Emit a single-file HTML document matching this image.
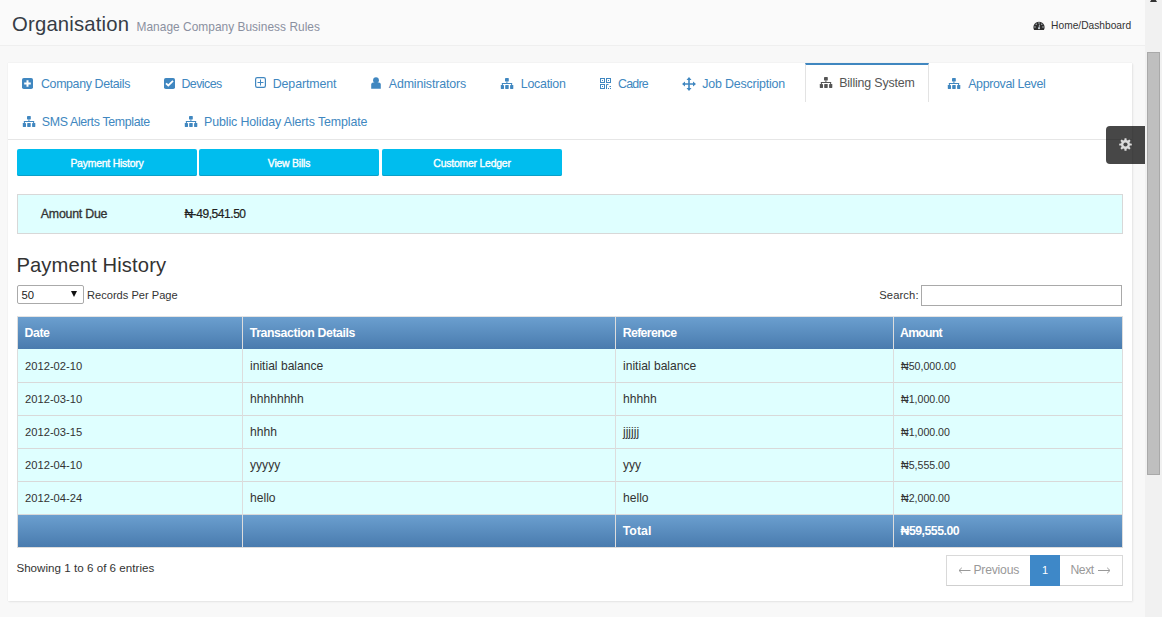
<!DOCTYPE html>
<html><head><meta charset="utf-8">
<style>
*{box-sizing:border-box;}
html,body{margin:0;padding:0;}
body{width:1162px;height:617px;overflow:hidden;position:relative;background:#f8f8f8;font-family:"Liberation Sans",sans-serif;color:#333;}
.a{position:absolute;white-space:nowrap;line-height:1;}
#hdr{position:absolute;left:0;top:0;width:1145px;height:46px;background:#fafafa;border-bottom:1px solid #efefef;}
#sb{position:absolute;left:1145px;top:0;width:17px;height:617px;background:#f1f1f1;}
#thumb{position:absolute;left:2px;top:52px;width:13px;height:423px;background:#bfbfbf;border:1px solid #a9a9a9;}
#panel{position:absolute;left:8px;top:63px;width:1124px;height:538px;background:#fff;box-shadow:1px 1px 2px rgba(0,0,0,.07),0 0 1px rgba(0,0,0,.1);}
.tab{color:#4087c0;font-size:11.8px;}
.ico{position:absolute;}
.btn{position:absolute;top:149px;width:180px;height:27px;background:#00bdee;border-radius:2px;box-shadow:inset 0 -1px 0 #0aa0c8;color:#fff;font-size:10.4px;letter-spacing:-0.2px;-webkit-text-stroke:0.35px #fff;text-align:center;line-height:29px;}
.th{position:absolute;color:#fff;font-weight:bold;font-size:11.3px;}
.td{position:absolute;font-size:11.3px;color:#333;}
</style></head><body>
<div id="hdr"></div>
<div class="a" id="org" style="left:12.1px;top:14px;font-size:20.3px;color:#363c46;letter-spacing:0.173px;">Organisation</div>
<div class="a" id="sub" style="left:136.5px;top:22px;font-size:11.9px;color:#8a90a0;letter-spacing:0.036px;">Manage Company Business Rules</div>
<svg class="ico" style="left:1033px;top:21px" width="12" height="9" viewBox="0 0 12 9"><path d="M1.1 9 A5.6 5.6 0 1 1 10.9 9 Z" fill="#2e2e2e"/><g fill="#cfd8e0"><circle cx="6" cy="2" r="0.65"/><circle cx="3.2" cy="3.2" r="0.65"/><circle cx="8.8" cy="3.2" r="0.65"/><circle cx="2" cy="6" r="0.65"/><circle cx="10" cy="6" r="0.65"/><circle cx="6" cy="7.3" r="1"/></g><path d="M6 7.3 L6.5 3.6" stroke="#cfd8e0" stroke-width="0.8"/></svg>
<div class="a" id="home" style="left:1051.1px;top:21px;font-size:10.2px;color:#333;letter-spacing:0.008px;">Home/Dashboard</div>

<div id="sb"><svg style="position:absolute;left:5px;top:-4px" width="7" height="6"><path d="M3.5 0 L7 6 L0 6Z" fill="#333"/></svg><div id="thumb"></div></div>

<div id="panel"></div>
<!-- active tab -->
<div style="position:absolute;left:805px;top:63px;width:124px;height:39px;border:1px solid #e3e3e3;border-top:2px solid #4087c0;border-bottom:none;background:#fff;"></div>
<div style="position:absolute;left:8px;top:139px;width:1124px;height:1px;background:#e6e6e6;"></div>

<!-- tab icons -->
<svg class="ico" style="left:22px;top:78px" width="11" height="11" viewBox="0 0 11 11"><rect x="0" y="0" width="11" height="11" rx="1.8" fill="#4087c0"/><path d="M5.5 2.2V8.8M2.2 5.5H8.8" stroke="#fff" stroke-width="2"/></svg>
<div class="a tab" id="t1" style="left:41.0px;top:78px;font-size:12.4px;letter-spacing:-0.357px;">Company Details</div>
<svg class="ico" style="left:164px;top:78px" width="11" height="11" viewBox="0 0 11 11"><rect x="0" y="0" width="11" height="11" rx="1.8" fill="#4087c0"/><path d="M2 5.3L4.3 7.5L9 2.8" stroke="#fff" stroke-width="1.8" fill="none"/></svg>
<div class="a tab" id="t2" style="left:181.4px;top:78px;font-size:12.4px;letter-spacing:-0.533px;">Devices</div>
<svg class="ico" style="left:255px;top:77px" width="11" height="11" viewBox="0 0 11 11"><rect x="0.6" y="0.6" width="9.8" height="9.8" rx="1.6" fill="none" stroke="#4087c0" stroke-width="1.2"/><path d="M5.5 2.5V8.5M2.5 5.5H8.5" stroke="#4087c0" stroke-width="1"/></svg>
<div class="a tab" id="t3" style="left:272.8px;top:78px;font-size:12.4px;letter-spacing:-0.133px;">Department</div>
<svg class="ico" style="left:371px;top:77px" width="10" height="12" viewBox="0 0 10 12"><path d="M0.2 11.8V7.6Q0.2 5.6 2.2 5.6H7.8Q9.8 5.6 9.8 7.6V11.8Z" fill="#4087c0"/><circle cx="5" cy="3.2" r="2.9" fill="#4087c0"/></svg>
<div class="a tab" id="t4" style="left:388.8px;top:78px;font-size:12.4px;letter-spacing:-0.138px;">Administrators</div>
<svg class="ico" style="left:500px;top:78px" width="14" height="11" viewBox="0 0 14 11"><g fill="#4087c0"><rect x="5" y="0" width="3.8" height="3.5" rx="0.4"/><rect x="6.4" y="3.4" width="1" height="1.8"/><rect x="1.9" y="5" width="10.2" height="1"/><rect x="1.9" y="5" width="1" height="2.2"/><rect x="11.1" y="5" width="1" height="2.2"/><rect x="0.8" y="7" width="3.2" height="4" rx="0.4"/><rect x="5.2" y="7" width="3.5" height="4" rx="0.4"/><rect x="10.1" y="7" width="3.2" height="4" rx="0.4"/></g></svg>
<div class="a tab" id="t5" style="left:520.8px;top:78px;font-size:12.4px;letter-spacing:-0.257px;">Location</div>
<svg class="ico" style="left:600px;top:78px" width="11" height="11" viewBox="0 0 11 11"><rect x="0.5" y="0.5" width="4" height="4" fill="none" stroke="#4087c0"/><rect x="6.5" y="0.5" width="4" height="4" fill="none" stroke="#4087c0"/><rect x="0.5" y="6.5" width="4" height="4" fill="none" stroke="#4087c0"/><rect x="2" y="2" width="1" height="1" fill="#4087c0"/><rect x="8" y="2" width="1" height="1" fill="#4087c0"/><rect x="2" y="8" width="1" height="1" fill="#4087c0"/><path d="M6.5 11V6.5H8.5M9.5 8.5H11M8 10.5h1M10 10.5h1" stroke="#4087c0" fill="none"/></svg>
<div class="a tab" id="t6" style="left:618.0px;top:78px;font-size:12.4px;letter-spacing:-0.75px;">Cadre</div>
<svg class="ico" style="left:682px;top:77px" width="14" height="14" viewBox="0 0 14 14"><path d="M7 1.5V12.5M1.5 7H12.5" stroke="#4087c0" stroke-width="1.6"/><path d="M7 0L9.5 3H4.5Z M7 14L9.5 11H4.5Z M0 7L3 4.5V9.5Z M14 7L11 4.5V9.5Z" fill="#4087c0"/></svg>
<div class="a tab" id="t7" style="left:702.2px;top:78px;font-size:12.4px;letter-spacing:-0.171px;">Job Description</div>
<svg class="ico" style="left:819px;top:77px" width="14" height="11" viewBox="0 0 14 11"><g fill="#555"><rect x="5" y="0" width="3.8" height="3.5" rx="0.4"/><rect x="6.4" y="3.4" width="1" height="1.8"/><rect x="1.9" y="5" width="10.2" height="1"/><rect x="1.9" y="5" width="1" height="2.2"/><rect x="11.1" y="5" width="1" height="2.2"/><rect x="0.8" y="7" width="3.2" height="4" rx="0.4"/><rect x="5.2" y="7" width="3.5" height="4" rx="0.4"/><rect x="10.1" y="7" width="3.2" height="4" rx="0.4"/></g></svg>
<div class="a tab" id="t8" style="left:839.2px;top:77px;font-size:12.4px;letter-spacing:-0.169px;color:#555;">Billing System</div>
<svg class="ico" style="left:947px;top:78px" width="14" height="11" viewBox="0 0 14 11"><g fill="#4087c0"><rect x="5" y="0" width="3.8" height="3.5" rx="0.4"/><rect x="6.4" y="3.4" width="1" height="1.8"/><rect x="1.9" y="5" width="10.2" height="1"/><rect x="1.9" y="5" width="1" height="2.2"/><rect x="11.1" y="5" width="1" height="2.2"/><rect x="0.8" y="7" width="3.2" height="4" rx="0.4"/><rect x="5.2" y="7" width="3.5" height="4" rx="0.4"/><rect x="10.1" y="7" width="3.2" height="4" rx="0.4"/></g></svg>
<div class="a tab" id="t9" style="left:968.2px;top:78px;font-size:12.4px;letter-spacing:-0.338px;">Approval Level</div>
<svg class="ico" style="left:22px;top:116px" width="14" height="11" viewBox="0 0 14 11"><g fill="#4087c0"><rect x="5" y="0" width="3.8" height="3.5" rx="0.4"/><rect x="6.4" y="3.4" width="1" height="1.8"/><rect x="1.9" y="5" width="10.2" height="1"/><rect x="1.9" y="5" width="1" height="2.2"/><rect x="11.1" y="5" width="1" height="2.2"/><rect x="0.8" y="7" width="3.2" height="4" rx="0.4"/><rect x="5.2" y="7" width="3.5" height="4" rx="0.4"/><rect x="10.1" y="7" width="3.2" height="4" rx="0.4"/></g></svg>
<div class="a tab" id="t10" style="left:41.8px;top:116px;font-size:12.4px;letter-spacing:-0.356px;">SMS Alerts Template</div>
<svg class="ico" style="left:184px;top:116px" width="14" height="11" viewBox="0 0 14 11"><g fill="#4087c0"><rect x="5" y="0" width="3.8" height="3.5" rx="0.4"/><rect x="6.4" y="3.4" width="1" height="1.8"/><rect x="1.9" y="5" width="10.2" height="1"/><rect x="1.9" y="5" width="1" height="2.2"/><rect x="11.1" y="5" width="1" height="2.2"/><rect x="0.8" y="7" width="3.2" height="4" rx="0.4"/><rect x="5.2" y="7" width="3.5" height="4" rx="0.4"/><rect x="10.1" y="7" width="3.2" height="4" rx="0.4"/></g></svg>
<div class="a tab" id="t11" style="left:204.0px;top:116px;font-size:12.4px;letter-spacing:-0.103px;">Public Holiday Alerts Template</div>

<!-- settings box -->
<div style="position:absolute;left:1106px;top:126px;width:39px;height:38px;background:rgba(0,0,0,.72);border-radius:4px 0 0 4px;"></div>
<svg class="ico" style="left:1119px;top:138px" width="13" height="13" viewBox="0 0 13 13"><g fill="#dcdcdc"><circle cx="6.5" cy="6.5" r="4.5"/><g id="tt"><rect x="5.4" y="0.2" width="2.2" height="12.6" rx="0.6"/></g><rect x="5.4" y="0.2" width="2.2" height="12.6" rx="0.6" transform="rotate(45 6.5 6.5)"/><rect x="5.4" y="0.2" width="2.2" height="12.6" rx="0.6" transform="rotate(90 6.5 6.5)"/><rect x="5.4" y="0.2" width="2.2" height="12.6" rx="0.6" transform="rotate(135 6.5 6.5)"/></g><circle cx="6.5" cy="6.5" r="2.1" fill="#484848"/></svg>

<!-- buttons -->
<div class="btn" style="left:17px;">Payment History</div>
<div class="btn" style="left:199px;">View Bills</div>
<div class="btn" style="left:382px;">Customer Ledger</div>

<!-- amount due -->
<div style="position:absolute;left:17px;top:194px;width:1106px;height:40px;background:#dfffff;border:1px solid #d8d8d8;"></div>
<div class="a" id="amt" style="left:40.8px;top:208px;font-size:12.4px;-webkit-text-stroke:0.3px #333;color:#333;letter-spacing:-0.244px;">Amount Due</div>
<div class="a" id="amtv" style="left:184.4px;top:208px;font-size:12px;color:#222;-webkit-text-stroke:0.2px #222;letter-spacing:-0.44px;">₦-49,541.50</div>

<div class="a" id="ph" style="left:16.4px;top:255px;font-size:20.2px;color:#333;letter-spacing:0.114px;">Payment History</div>
<div style="position:absolute;left:17px;top:285px;width:67px;height:19px;border:1px solid #aaa;border-radius:2px;background:#fff;"></div>
<div class="a" style="left:21.5px;top:290px;font-size:11.3px;color:#222;">50</div>
<svg class="ico" style="left:71px;top:291px" width="6" height="6" viewBox="0 0 6 6"><path d="M0 0H6L3 6Z" fill="#111"/></svg>
<div class="a" id="rpp" style="left:87.0px;top:290px;font-size:11.1px;color:#333;letter-spacing:0.0px;">Records Per Page</div>
<div class="a" id="search" style="left:879.2px;top:290px;font-size:11.2px;color:#333;letter-spacing:0.133px;">Search:</div>
<div style="position:absolute;left:921px;top:285px;width:201px;height:21px;border:1px solid #a9a9a9;background:#fff;"></div>

<!-- table -->
<div style="position:absolute;left:17px;top:316px;width:1106px;height:232px;border:1px solid #ddd;border-top-color:#e4e4e4;background:#dfffff;"></div>
<div style="position:absolute;left:18px;top:317px;width:1104px;height:32px;background:linear-gradient(#6b9fcf,#497bae);"></div>
<div style="position:absolute;left:18px;top:515px;width:1104px;height:32px;background:linear-gradient(#6b9fcf,#497bae);"></div>
<div style="position:absolute;left:18px;top:382px;width:1104px;height:1px;background:#d9d9d9;"></div>
<div style="position:absolute;left:18px;top:415px;width:1104px;height:1px;background:#d9d9d9;"></div>
<div style="position:absolute;left:18px;top:448px;width:1104px;height:1px;background:#d9d9d9;"></div>
<div style="position:absolute;left:18px;top:481px;width:1104px;height:1px;background:#d9d9d9;"></div>
<div style="position:absolute;left:18px;top:514px;width:1104px;height:1px;background:#d9d9d9;"></div>
<div style="position:absolute;left:242px;top:317px;width:1px;height:230px;background:#ddd;"></div>
<div style="position:absolute;left:615px;top:317px;width:1px;height:230px;background:#ddd;"></div>
<div style="position:absolute;left:893px;top:317px;width:1px;height:230px;background:#ddd;"></div>

<div class="a th" id="thd" style="left:24.4px;top:327px;font-size:12.3px;letter-spacing:-0.367px;">Date</div>
<div class="a th" id="tht" style="left:249.7px;top:327px;font-size:12.3px;letter-spacing:-0.389px;">Transaction Details</div>
<div class="a th" id="thr" style="left:622.7px;top:327px;font-size:12.3px;letter-spacing:-0.637px;">Reference</div>
<div class="a th" id="tha" style="left:900.1px;top:327px;font-size:12.3px;letter-spacing:-0.78px;">Amount</div>

<div class="a td" style="left:25px;top:361px;font-size:11.2px;">2012-02-10</div>
<div class="a td" style="left:250px;top:360px;font-size:12.1px;">initial balance</div>
<div class="a td" style="left:623px;top:360px;font-size:12.1px;">initial balance</div>
<div class="a td" style="left:901px;top:361px;font-size:10.6px;">₦50,000.00</div>

<div class="a td" style="left:25px;top:394px;font-size:11.2px;">2012-03-10</div>
<div class="a td" style="left:250px;top:393px;font-size:12.1px;">hhhhhhhh</div>
<div class="a td" style="left:623px;top:393px;font-size:12.1px;">hhhhh</div>
<div class="a td" style="left:901px;top:394px;font-size:10.6px;">₦1,000.00</div>

<div class="a td" style="left:25px;top:427px;font-size:11.2px;">2012-03-15</div>
<div class="a td" style="left:250px;top:426px;font-size:12.1px;">hhhh</div>
<div class="a td" style="left:623px;top:426px;font-size:12.1px;">jjjjjj</div>
<div class="a td" style="left:901px;top:427px;font-size:10.6px;">₦1,000.00</div>

<div class="a td" style="left:25px;top:460px;font-size:11.2px;">2012-04-10</div>
<div class="a td" style="left:250px;top:459px;font-size:12.1px;">yyyyy</div>
<div class="a td" style="left:623px;top:459px;font-size:12.1px;">yyy</div>
<div class="a td" style="left:901px;top:460px;font-size:10.6px;">₦5,555.00</div>

<div class="a td" style="left:25px;top:493px;font-size:11.2px;">2012-04-24</div>
<div class="a td" style="left:250px;top:492px;font-size:12.1px;">hello</div>
<div class="a td" style="left:623px;top:492px;font-size:12.1px;">hello</div>
<div class="a td" style="left:901px;top:493px;font-size:10.6px;">₦2,000.00</div>

<div class="a th" id="tot" style="left:622.7px;top:525px;font-size:12.3px;letter-spacing:0.05px;">Total</div>
<div class="a th" id="n59" style="left:900.6px;top:525px;font-size:12.3px;letter-spacing:-0.511px;">₦59,555.00</div>

<div class="a" id="show" style="left:16.4px;top:562px;font-size:11.6px;color:#333;letter-spacing:0.023px;">Showing 1 to 6 of 6 entries</div>

<!-- pagination -->
<div style="position:absolute;left:946px;top:555px;width:177px;height:31px;border:1px solid #d9d9d9;border-bottom:1px solid #cfcfcf;background:#fff;"></div>
<div style="position:absolute;left:1030px;top:555px;width:30px;height:31px;background:#3e88c8;"></div>
<svg class="ico" style="left:958px;top:567px" width="13" height="7" viewBox="0 0 13 7"><path d="M1 3.5H12.5M3.8 0.8L1 3.5L3.8 6.2" stroke="#999" stroke-width="1" fill="none"/></svg>
<div class="a" id="prevt" style="left:973.4px;top:564px;font-size:12.2px;color:#999;letter-spacing:-0.214px;">Previous</div>
<div class="a" style="left:1042px;top:565px;font-size:11px;color:#fff;">1</div>
<div class="a" id="nextt" style="left:1070.5px;top:564px;font-size:12.2px;color:#999;letter-spacing:-0.467px;">Next</div>
<svg class="ico" style="left:1098px;top:567px" width="13" height="7" viewBox="0 0 13 7"><path d="M0 3.5H11.5M9.2 0.8L12 3.5L9.2 6.2" stroke="#999" stroke-width="1" fill="none"/></svg>
</body></html>
